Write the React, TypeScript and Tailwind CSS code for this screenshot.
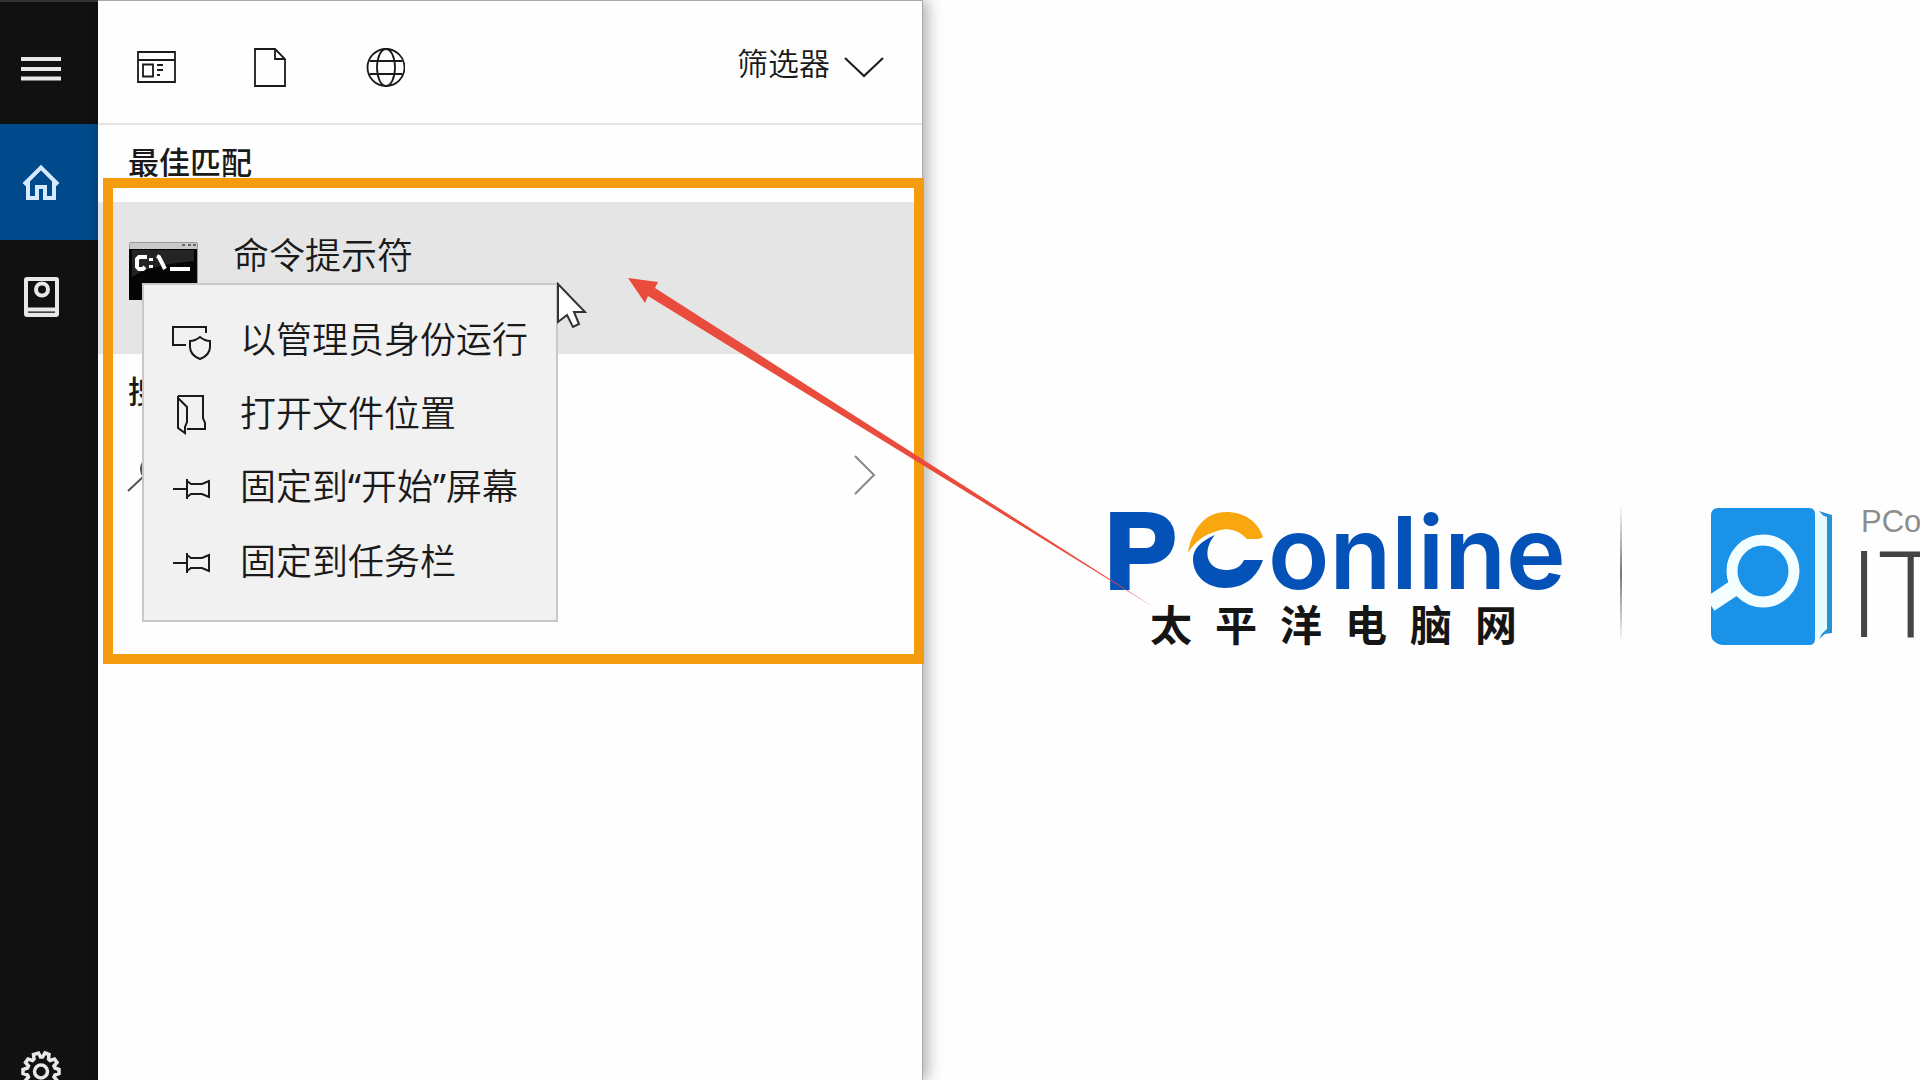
import React from 'react';

const line = { fill: 'none', stroke: 'currentColor' } as const;

function RailButton({ label, active, children }: { label: string; active?: boolean; children: React.ReactNode }) {
  return (
    <button
      type="button"
      aria-label={label}
      className={`flex h-[116px] w-full shrink-0 items-center pl-5 ${active ? 'bg-[#004a8b] text-[#d6eaff]' : 'text-[#e8e8e8]'}`}
    >
      {children}
    </button>
  );
}

function Rail() {
  return (
    <nav aria-label="导航" className="flex w-[98px] shrink-0 flex-col border-t-2 border-t-[#333] bg-[#111111] pt-1.5">
      <RailButton label="菜单">
        <svg width="42" height="42" viewBox="0 0 42 42" {...line} strokeWidth="4">
          <path d="M1 14H41M1 24H41M1 33.500H41" />
        </svg>
      </RailButton>
      <RailButton label="主页" active>
        <svg width="42" height="42" viewBox="0 0 42 42" {...line} strokeWidth="4">
          <path d="M4 23.500 21 6.500 38 23.500M8 20V37H17V26H25V37H34V20" />
        </svg>
      </RailButton>
      <RailButton label="笔记本">
        <svg width="42" height="42" viewBox="0 0 42 42" {...line} strokeWidth="4">
          <rect x="6" y="2" width="31" height="36" rx="1" />
          <path d="M6 33H37" strokeWidth="5" />
          <path d="M8 35H35" stroke="#111" strokeWidth="1" />
          <circle cx="22" cy="12.500" r="6" />
        </svg>
      </RailButton>
      <div className="mt-auto -mb-3 flex">
        <button type="button" aria-label="设置" className="pl-5 text-[#e8e8e8]">
          <svg width="42" height="42" viewBox="0 0 42 42" {...line} strokeWidth="3.500">
            <path d="M18.500 3 20.500 7H22.500L25 3 29 4.500 28.500 9 30 10.500 34.500 9 37 12.500 34 16 35 18 39 19.500V23.500L35 25 34 27 37 30.500 34 34 30 32 28.500 33.500 29 38 25 39.500 22.500 35.500H20.500L18 39.500 13.500 38 14 33.500 12.500 32 8 34 5.500 30.500 8.500 27 7.500 25 3 23.500V19.500L7.500 18 8.500 16 5.500 12.500 8 9 12.500 10.500 14 9 13.500 4.500Z" />
            <circle cx="21" cy="21.500" r="6.500" />
          </svg>
        </button>
      </div>
    </nav>
  );
}

function Header() {
  return (
    <header className="flex h-[124px] items-center justify-between border-b-2 border-[#e4e4e4] pr-[38px] pl-9">
      <div className="mt-2 flex">
        <button type="button" aria-label="应用" className="mr-[75px]">
          <svg width="42" height="42" viewBox="0 0 42 42" {...line} strokeWidth="1.800">
            <path d="M4 7H41V37H4ZM4 15H41M9 19.500H19V31.500H9ZM23 20H29M23 25H29M23 30H26" />
          </svg>
        </button>
        <button type="button" aria-label="文档" className="mr-[70px]">
          <svg width="42" height="42" viewBox="0 0 42 42" {...line} strokeWidth="1.800">
            <path d="M4 4H24L34 14V41H4ZM24 4V14H34" />
          </svg>
        </button>
        <button type="button" aria-label="网页">
          <svg width="42" height="42" viewBox="0 0 42 42" {...line} strokeWidth="1.800">
            <circle cx="23" cy="22.500" r="18.500" />
            <ellipse cx="23" cy="22.500" rx="9" ry="18.500" />
            <path d="M6.500 16H39.500M6.500 29H39.500" />
          </svg>
        </button>
      </div>
      <button type="button" className="flex items-center gap-3.5 text-[31px] leading-10">
        筛选器
        <svg width="40" height="22" viewBox="0 0 40 22" {...line} strokeWidth="2" className="mt-2.5">
          <path d="M1 2 20 20 39 2" />
        </svg>
      </button>
    </header>
  );
}

function CmdIcon() {
  return (
    <svg width="72" height="60" viewBox="0 0 72 60" className="shrink-0">
      <rect x="1" y="1" width="69" height="58" rx="2" fill="#9a9a9a" />
      <rect x="2" y="2" width="67" height="6" fill="#c9c9c9" />
      <path d="M54 4h3M60 4h3M65 4h3" stroke="#666" strokeWidth="2" />
      <rect x="1" y="8" width="68" height="51" fill="#050505" />
      <path d="M4 9H66V20Q20 24 4 36Z" fill="#242424" />
      <path d="M17 18V16H11L9 18V26L11 28H15L17 26M23 17V20M23 24V27M29 15 31 16 37 28" fill="none" stroke="#fff" strokeWidth="4" />
      <path d="M42 28H62" stroke="#fff" strokeWidth="4" />
    </svg>
  );
}

const pin = <path d="M1 20H14M15 10V30M15 12 19 15H30L37 12V28L30 25H19L15 28" />;

const menuItems = [
  {
    label: '以管理员身份运行',
    icon: (
      <>
        <path d="M14 24H1V6H34V12" />
        <path d="M28 16Q23 20 18 20V26Q18 34 28 38Q38 34 38 26V20Q33 20 28 16Z" />
      </>
    ),
  },
  { label: '打开文件位置', icon: <path d="M6 1H31V23L33 28V34H15M6 1V33L13 38V32L15 27V12L6 3" /> },
  { label: '固定到"开始"屏幕', icon: pin },
  { label: '固定到任务栏', icon: pin },
];

function MenuLabel({ text }: { text: string }) {
  const parts = text.split('"');
  if (parts.length < 3) return <span>{text}</span>;
  return (
    <span>
      {parts[0]}
      <span className="font-['Noto_Sans',sans-serif] font-normal">“</span>
      {parts[1]}
      <span className="font-['Noto_Sans',sans-serif] font-normal">”</span>
      {parts[2]}
    </span>
  );
}

function ContextMenu() {
  return (
    <ul className="absolute top-[81px] left-11 z-10 w-[416px] border-2 border-[#c8c8c8] bg-[#f1f1f1] pt-[15px] pb-6">
      {menuItems.map((item) => (
        <li key={item.label}>
          <button type="button" className="flex h-[74px] w-full items-center gap-7 pl-7 text-4xl whitespace-nowrap">
            <svg width="40" height="40" viewBox="0 0 40 40" {...line} strokeWidth="2" className="mt-2 shrink-0">
              {item.icon}
            </svg>
            <MenuLabel text={item.label} />
          </button>
        </li>
      ))}
    </ul>
  );
}

function SearchPanel() {
  return (
    <section className="relative w-[825px] shrink-0 border-t border-r border-[#aaa] bg-[#fefefe] shadow-[5px_0_14px_rgba(0,0,0,0.3)]">
      <Header />
      <h2 className="flex h-[77px] items-center pb-1 pl-[30px] text-[31px] font-medium">最佳匹配</h2>
      <div className="relative">
        <button type="button" className="flex h-[152px] w-full items-start gap-[33px] bg-[#e5e5e5] pt-[39px] pl-[30px] text-left">
          <CmdIcon />
          <span className="-mt-2 text-4xl">命令提示符</span>
        </button>
        <ContextMenu />
      </div>
      <h2 className="flex h-[77px] items-center pb-1 pl-[30px] text-[31px] font-medium">搜</h2>
      <button type="button" aria-label="搜索" className="flex h-[88px] w-full items-center justify-between pr-[46px] pl-[29px]">
        <svg width="38" height="36" viewBox="0 0 38 36" {...line} strokeWidth="2" className="text-[#555]">
          <circle cx="25" cy="12" r="11" />
          <path d="M1 34 17 19" />
        </svg>
        <svg width="22" height="40" viewBox="0 0 22 40" {...line} strokeWidth="2" className="text-[#888]">
          <path d="M1 1 20 20 1 39" />
        </svg>
      </button>
      <div className="pointer-events-none absolute top-[177px] left-[5px] z-20 h-[486px] w-[821px] border-10 border-[#f49b10]" />
      <svg width="32" height="48" viewBox="0 0 32 48" className="absolute top-[281px] left-[459px] z-20">
        <path d="M1 2V40L10 33 16 45 22 42 17 30H28Z" fill="#fff" stroke="#333" strokeWidth="2" />
      </svg>
      <svg width="532" height="334" viewBox="0 0 532 334" className="pointer-events-none absolute top-[277px] left-[530px] z-30">
        <path d="M0 0 30 4 27 10 527 330 20 18 17 25Z" fill="#e94b3c" />
      </svg>
    </section>
  );
}

function Logos() {
  return (
    <main className="flex min-w-0 flex-1 items-start overflow-hidden bg-[#fefefe] pt-[500px] pl-[181px]">
      <div className="w-[468px] shrink-0">
        <svg width="468" height="98" viewBox="0 0 468 98" className="overflow-visible">
          <g fill="#0452b8">
            <text x="1" y="88" fontSize="107" fontWeight="700" fontFamily="Liberation Sans, sans-serif" stroke="#0452b8" strokeWidth="4">P</text>
            <text x="164" y="89" fontSize="101" fontWeight="600" fontFamily="Inter, sans-serif">online</text>
          </g>
          <path d="M84 53C88 27 103 12 122 12C141 12 154 22 159 37L155 39H143C134 30 125 27 113 31C99 35 91 42 84 53Z" fill="#f9a70e" />
          <path d="M111 35C97 41 89 49 89 59C89 76 103 88 121 88C141 88 153 77 159 60H140C136 68 130 70 121 70C102 69 98 50 111 35Z" fill="#0452b8" />
        </svg>
        <div className="flex gap-[23px] pl-[46px] text-[42px] leading-[50px] font-bold text-[#151515]">
          {['太', '平', '洋', '电', '脑', '网'].map((c) => (
            <span key={c}>{c}</span>
          ))}
        </div>
      </div>
      <div className="mt-1 ml-12 h-[140px] w-0.5 shrink-0 bg-linear-to-b from-transparent via-[#777] to-transparent" />
      <svg width="124" height="140" viewBox="0 0 124 140" className="mt-[7px] ml-[88px] shrink-0">
        <path d="M8 1H99Q105 1 105 7V132Q105 138 99 138H12Q8 138 5 135 1 132 1 127V9Q1 1 8 1Z" fill="#1a92e8" />
        <path d="M109 4 122 8V126L115 127 109 132 116 119V12Z" fill="#2793d6" />
        <path d="M106 6 117 10V122L106 132Z" fill="#e6fbff" />
        <path d="M0 97 27 79" stroke="#f2feff" strokeWidth="16" />
        <circle cx="53" cy="64" r="31" fill="none" stroke="#f2feff" strokeWidth="11" />
      </svg>
      <div className="mt-1 ml-[27px] shrink-0">
        <div className="font-['Liberation_Sans',sans-serif] text-[31px] leading-9 text-[#8d8d8d]">PCo</div>
        <div className="-ml-3 font-['Open_Sans',sans-serif] text-[120px] leading-[102px] font-[350] text-[#444]">IT</div>
      </div>
    </main>
  );
}

export default function App() {
  return (
    <div className="flex h-screen overflow-hidden bg-[#fefefe] font-['Noto_Sans_CJK_SC',sans-serif] font-[350] text-[#1a1a1a]">
      <Rail />
      <SearchPanel />
      <Logos />
    </div>
  );
}
